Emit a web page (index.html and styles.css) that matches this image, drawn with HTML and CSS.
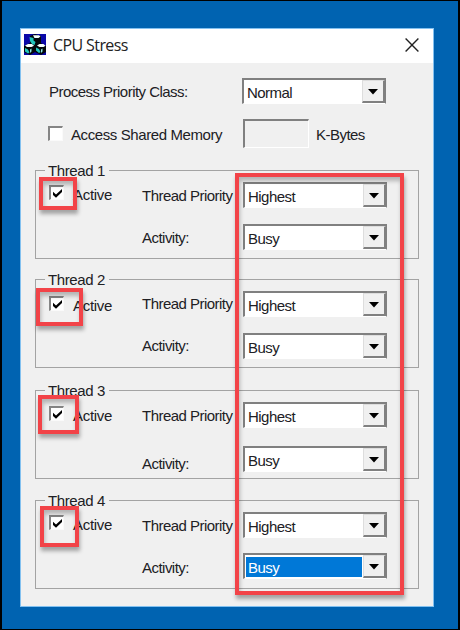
FILE: index.html
```html
<!DOCTYPE html>
<html lang="en">
<head>
<meta charset="utf-8">
<title>CPU Stress</title>
<link rel="stylesheet" href="styles.css">
</head>
<body>
<main class="desktop">
  <section class="window">
    <header class="titlebar">
      <svg class="logo" viewBox="0 0 22 21">
        <path fill="#0a08a8" d="M0 0h22v21H0z"/>
        <path fill="#03080c" d="M6 2l5-2 6 2v7l5 3v6l-5 3-6-3-5 3-6-3v-6l6-3z"/>
        <path fill="#f4ffff" d="M9 1.2h6l1.5 1.3-2 1.5h-4zM1 11.5L4 10h4l2 1.8L7.5 13H3zM13 11.5l2.5-1.5h4l2 1.8-2 1.2h-4z"/>
        <path fill="#21c6bd" d="M5.5 3l4 1v2.5l2 1.5-1 3-2.5-1-2-3zM1 14l3 1.5 1.5 3-1.5 1-3-2zM12 13.5l3 1.5 1.5 3-1.5 1-3-2.5z"/>
        <path fill="#8ce9e5" d="M6 15.5l1.5-1v3L6 19zM17 15.5l1.5-1v3L17 19z"/>
      </svg>
      <h1 class="title">CPU Stress</h1>
      <svg class="close" viewBox="0 0 14 14"><path d="M.6.6l12.8 12.8M13.4.6L.6 13.4"/></svg>
    </header>
    <div class="content">
      <div class="row row-class">
        <span class="label">Process Priority Class:</span>
        <div class="combo"><span class="value">Normal</span><span class="drop"><svg class="arrow" viewBox="0 0 10 6"><path d="M0 0h10L5 5.5z"/></svg></span></div>
      </div>
      <div class="row row-memory">
        <span class="check"></span>
        <span class="label memory">Access Shared Memory</span>
        <span class="size"></span>
        <span class="label">K-Bytes</span>
      </div>
      <section class="group g1">
        <h2 class="legend">Thread 1</h2>
        <div class="active"><span class="check"><svg viewBox="0 0 9 9"><path d="M0 2.8l3 2.8L9 0v3L3 8.7 0 6z"/></svg></span><span class="label">Active</span></div>
        <span class="label priority">Thread Priority</span>
        <div class="combo first"><span class="value">Highest</span><span class="drop"><svg class="arrow" viewBox="0 0 10 6"><path d="M0 0h10L5 5.5z"/></svg></span></div>
        <span class="label activity">Activity:</span>
        <div class="combo second"><span class="value">Busy</span><span class="drop"><svg class="arrow" viewBox="0 0 10 6"><path d="M0 0h10L5 5.5z"/></svg></span></div>
      </section>
      <section class="group g2">
        <h2 class="legend">Thread 2</h2>
        <div class="active"><span class="check"><svg viewBox="0 0 9 9"><path d="M0 2.8l3 2.8L9 0v3L3 8.7 0 6z"/></svg></span><span class="label">Active</span></div>
        <span class="label priority">Thread Priority</span>
        <div class="combo first"><span class="value">Highest</span><span class="drop"><svg class="arrow" viewBox="0 0 10 6"><path d="M0 0h10L5 5.5z"/></svg></span></div>
        <span class="label activity">Activity:</span>
        <div class="combo second"><span class="value">Busy</span><span class="drop"><svg class="arrow" viewBox="0 0 10 6"><path d="M0 0h10L5 5.5z"/></svg></span></div>
      </section>
      <section class="group g3">
        <h2 class="legend">Thread 3</h2>
        <div class="active"><span class="check"><svg viewBox="0 0 9 9"><path d="M0 2.8l3 2.8L9 0v3L3 8.7 0 6z"/></svg></span><span class="label">Active</span></div>
        <span class="label priority">Thread Priority</span>
        <div class="combo first"><span class="value">Highest</span><span class="drop"><svg class="arrow" viewBox="0 0 10 6"><path d="M0 0h10L5 5.5z"/></svg></span></div>
        <span class="label activity">Activity:</span>
        <div class="combo second"><span class="value">Busy</span><span class="drop"><svg class="arrow" viewBox="0 0 10 6"><path d="M0 0h10L5 5.5z"/></svg></span></div>
      </section>
      <section class="group g4">
        <h2 class="legend">Thread 4</h2>
        <div class="active"><span class="check"><svg viewBox="0 0 9 9"><path d="M0 2.8l3 2.8L9 0v3L3 8.7 0 6z"/></svg></span><span class="label">Active</span></div>
        <span class="label priority">Thread Priority</span>
        <div class="combo first"><span class="value">Highest</span><span class="drop"><svg class="arrow" viewBox="0 0 10 6"><path d="M0 0h10L5 5.5z"/></svg></span></div>
        <span class="label activity">Activity:</span>
        <div class="combo second"><span class="value selected">Busy</span><span class="drop"><svg class="arrow" viewBox="0 0 10 6"><path d="M0 0h10L5 5.5z"/></svg></span></div>
      </section>
    </div>
  </section>
  <div class="mark mark-1"></div>
  <div class="mark mark-2"></div>
  <div class="mark mark-3"></div>
  <div class="mark mark-4"></div>
  <div class="mark mark-combos"></div>
</main>
</body>
</html>
```
FILE: styles.css
```css
* { box-sizing: border-box; }

body {
  margin: 0;
  background: #000;
  font: 15px/18px "Liberation Sans", Arial, sans-serif;
  letter-spacing: -0.53px;
  color: #202024;
}

.desktop {
  position: relative;
  width: 460px;
  height: 630px;
  padding: 27px 25px 23px 18px;
  border: 1px solid #000;
  border-width: 1px 2px 1px 2px;
  background: #0063b1;
}

.window {
  width: 414px;
  height: 579px;
  border: 1px solid #83c1f0;
  background: #f0f0f0;
}

.titlebar {
  display: flex;
  align-items: center;
  height: 34px;
  padding: 0 14px 0 3px;
  background: #fff;
}

.logo { width: 22px; height: 21px; margin-top: -3px; }

.title {
  flex: 1;
  margin: -2px 0 0 7px;
  font: 400 16px/22px "Open Sans", sans-serif;
  letter-spacing: -0.6px;
  color: #222;
}

.close { width: 14px; height: 14px; margin-top: -2px; }
.close path { stroke: #222; stroke-width: 1.4; fill: none; }

.content { padding: 14px 14px 0; }

.label { white-space: nowrap; }

.row { display: flex; align-items: center; padding-left: 14px; }
.row-class { height: 27px; justify-content: space-between; padding-right: 33px; }
.row-class .label { padding-top: 3px; }
.row-memory { height: 30px; margin-top: 14px; }
.row-memory .label { padding-top: 3px; }
.row-memory .check { margin-left: -1px; }
.memory { width: 172px; margin-left: 8px; letter-spacing: -0.4px; }

.size {
  width: 66px;
  height: 29px;
  margin-right: 7px;
  border: 2px solid #808080;
  border-right: 1px solid #fff;
  border-bottom: 1px solid #fff;
}

.check {
  display: flex;
  flex: none;
  width: 15px;
  height: 15px;
  padding: 2px 0 0 2px;
  border: 2px solid #858585;
  border-right: 1px solid #fafafa;
  border-bottom: 1px solid #fafafa;
  background: #fff;
}
.check svg { width: 9px; height: 9px; }

.combo {
  display: flex;
  width: 144px;
  height: 26px;
  border: 1px solid #808080;
  border-top-width: 2px;
  border-left-width: 2px;
  border-bottom-color: #fff;
  background: #fff;
}
.value { flex: 1; margin: 2px 1px 1px 1px; padding: 1px 0 0 2px; line-height: 20px; }
.selected { background: #0078d7; color: #fff; }

.drop {
  display: flex;
  align-items: center;
  justify-content: center;
  width: 23px;
  border: 1px solid #ddd;
  border-right: 2px solid #808080;
  border-bottom: 2px solid #808080;
  background: #f0f0f0;
}
.arrow { width: 10px; height: 6px; margin-top: 2px; }

.group {
  display: grid;
  grid-template-columns: 93px 101px 144px;
  align-items: start;
  width: 384px;
  height: 89px;
  padding-left: 13px;
  border: 1px solid #a3a3a3;
}
.legend {
  width: max-content;
  grid-column: 1 / -1;
  margin: -9px 0 0 -4px;
  padding: 0 4px 0 3px;
  font-size: 15px;
  font-weight: 400;
  line-height: 18px;
  letter-spacing: -0.4px;
  background: #f0f0f0;
}
.active { display: flex; align-items: flex-start; gap: 9px; }
.active .check { margin-top: -1px; }
.active .label { letter-spacing: -0.3px; }
.activity { grid-column: 2; }

.g1 { margin-top: 22px; grid-template-rows: 11px 42px 33px; }
.g1 .active { margin-top: 4px; }
.g1 .priority { margin-top: 5px; }
.g1 .activity { margin-top: 5px; }

.g2 { margin-top: 20px; grid-template-rows: 11px 42px 33px; }
.g2 .active { margin-top: 6px; }
.g2 .priority { margin-top: 4px; }
.g2 .activity { margin-top: 4px; }

.g3 { margin-top: 22px; grid-template-rows: 11px 44px 31px; }
.g3 .active { margin-top: 5px; }
.g3 .priority { margin-top: 5px; }
.g3 .activity { margin-top: 9px; }

.g4 { margin-top: 21px; grid-template-rows: 11px 41px 33px; }
.g4 .active { margin-top: 4px; }
.g4 .priority { margin-top: 5px; }
.g4 .activity { margin-top: 6px; }

.mark {
  position: absolute;
  border: 4px solid #f24348;
  box-shadow: 1px 4px 4px rgba(0,0,0,.32), inset 1px 4px 4px rgba(0,0,0,.25);
}
.mark-1 { left: 37px; top: 176px; width: 38px; height: 33px; }
.mark-2 { left: 34px; top: 287px; width: 47px; height: 38px; }
.mark-3 { left: 36px; top: 394px; width: 41px; height: 39px; }
.mark-4 { left: 38px; top: 505px; width: 39px; height: 41px; }
.mark-combos { left: 233px; top: 172px; width: 169px; height: 422px; }
```
